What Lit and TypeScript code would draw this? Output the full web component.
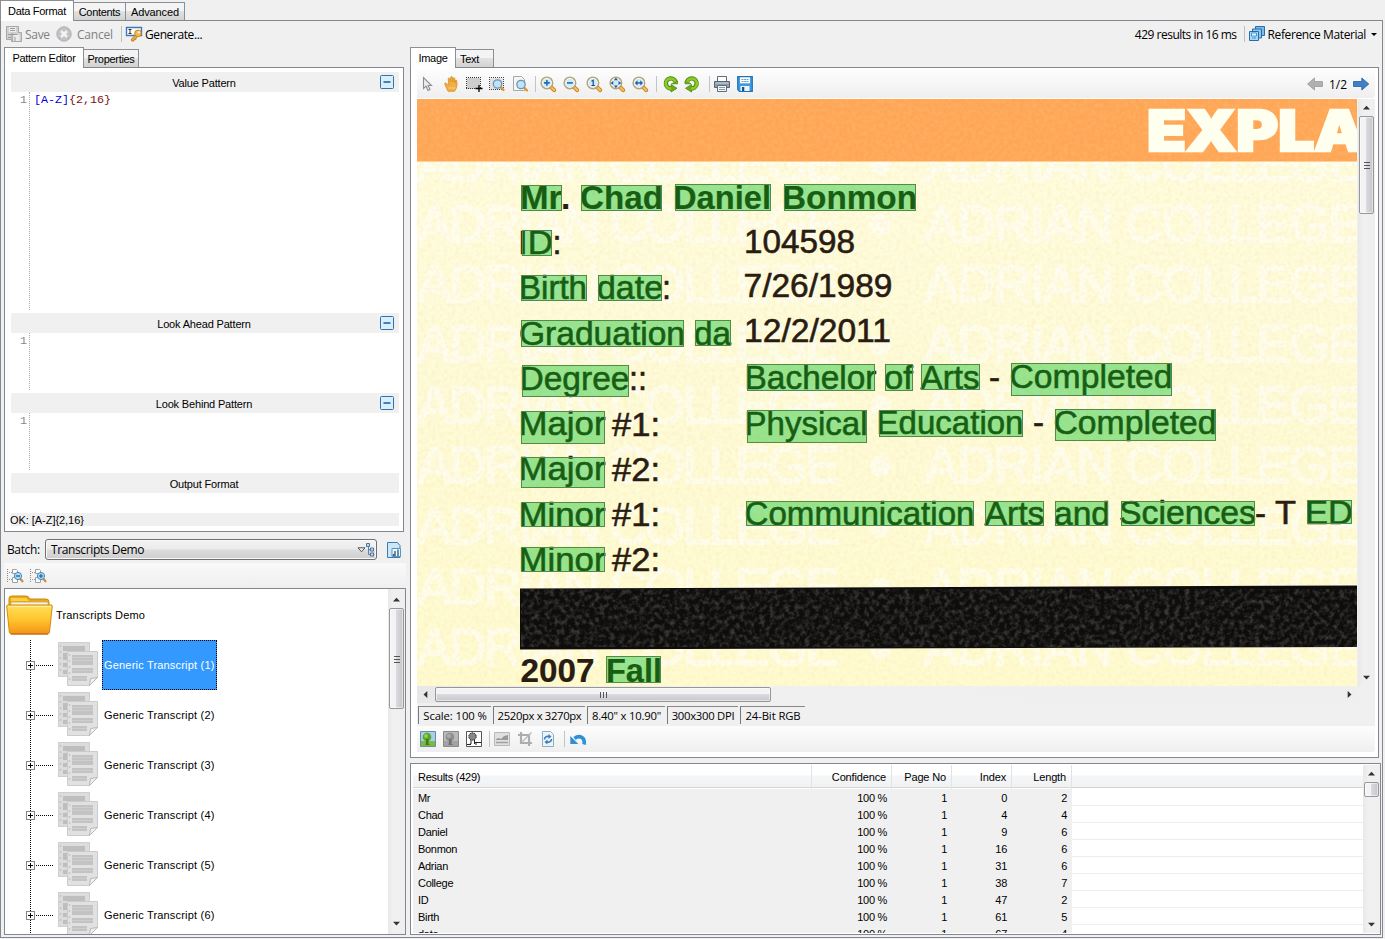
import { LitElement, html, svg, css, nothing } from "lit";
import { customElement, property } from "lit/decorators.js";

const glass = (inner: unknown) => svg`
  <path d="M10.8 10.8L14.2 14.2" stroke="#b87a1c" stroke-width="4" stroke-linecap="round"/>
  <path d="M10.8 10.8L14.2 14.2" stroke="#f8bd58" stroke-width="2.400" stroke-linecap="round"/>
  <circle cx="6.9" cy="6.9" r="5.7" fill="#cfeaf9" stroke="#b8a273" stroke-width="1.6"/>
  <circle cx="6.9" cy="6.9" r="4.6" fill="none" stroke="#fff" stroke-width=".7"/>${inner}`;

const smallGlass = (x: number, y: number) => svg`
  <path d="M${x + 3} ${y + 3}L${x + 6} ${y + 6}" stroke="#e0952a" stroke-width="2.4" stroke-linecap="round"/>
  <circle cx=${x} cy=${y} r="4.2" fill="#bfe3f8" stroke="#6d94b5" stroke-width="1.3"/>`;

const refreshArc = svg`
  <path d="M12.500 5.500A5 5 0 1 0 8.500 12.400" fill="none" stroke="#4f8a10" stroke-width="4.400"/>
  <path d="M8 8.500v7.500l6-3.700z" fill="#6aac16" stroke="#4f8a10" stroke-width=".8"/>
  <path d="M8.500 7.800h6V5z" fill="#6aac16" stroke="#4f8a10" stroke-width=".8"/>
  <path d="M12.300 5.500A5 5 0 1 0 8.500 12.400" fill="none" stroke="#8ccc26" stroke-width="2.600"/>`;

const treeBits = (sign: unknown) => svg`
  <path d="M.5 1v14" stroke="#888" stroke-dasharray="1 1"/>
  <path d="M2 4.500h3M2 11.500h3" stroke="#999" stroke-dasharray="1 1"/>
  <path d="M5.500 1.500h4l1 1v3h-5zM5.500 9.500h5v5h-5z" fill="#fff" stroke="#a0a0a0"/>
  <path d="M13 10.500l3 3.500" stroke="#c98a3c" stroke-width="2"/>
  <circle cx="11" cy="8" r="3.600" fill="#a9dcf5" stroke="#4b86b8"/>${sign}`;

const icons: Record<string, unknown> = {
  saveGray: svg`<path d="M.5.5h12v6h3v9h-10v-2h-5z" fill="#d0d0d0" stroke="#a8a8a8"/><path d="M3 1h7v5H3zM7.500 9h6v6h-6z" fill="#ececec"/><path d="M4 2.500h5M4 4.500h5M2 8.500h9M6 7v8M9 11v4M2 11.500h3" stroke="#9c9c9c"/>`,
  cancel: svg`<circle cx="8" cy="8" r="7.200" fill="#c2c2c2" stroke="#b0b0b0"/><path d="M5 5l6 6M11 5l-6 6" stroke="#f4f4f4" stroke-width="2.600"/>`,
  generate: svg`<path d="M.5 1.500h15v8H.5z" fill="#fff" stroke="#3f78b8" stroke-width="1.400"/><path d="M2.500 3.500h3M4 3.500v4M2.500 7.500h3" stroke="#333"/><path d="M10 8.500L5.500 13v2H8l.5-1.500H10V12l1.500-1" fill="#e9a73a" stroke="#b87a1c" stroke-width=".8"/><circle cx="12" cy="7.300" r="3.300" fill="#f5bb53" stroke="#c98923"/><circle cx="13" cy="6.300" r="1" fill="#fff"/>`,
  stack: svg`<path d="M6.500.5h9v9h-9z" fill="#7fbbe8" stroke="#2a6cab"/><path d="M3.500 3h9v9h-9z" fill="#8ec6ee" stroke="#2a6cab"/><path d="M.5 5.500h9v9h-9z" fill="#a9d8f5" stroke="#2a6cab"/><path d="M2.500 7h5v3h-5zM3 12h4" fill="#e8f6ff" stroke="#3a8ed0" stroke-width=".9"/>`,
  pointer: svg`<path d="M3.500 1.500v11l2.600-2.300 1.900 4.300 2-.9-1.900-4.100h3.400z" fill="#ececec" stroke="#8d8d95" stroke-width="1.100"/>`,
  hand: svg`<path d="M5 15.300h6.500c1.400-1.500 2.400-4 2.500-7.500l-.2-3c-.2-1-1.300-1-1.500 0l-.2 2.200-.3-4.500c-.1-1.100-1.500-1.100-1.600 0L9.900 6 9.400 1.300C9.300.2 7.800.2 7.700 1.300L7.600 6 6.700 2.600c-.3-1-1.600-.8-1.500.3l.6 6.300-2.600-2c-1-.7-1.900.3-1.300 1.200z" fill="#f3ae42" stroke="#d68f26" stroke-width=".8"/><path d="M5.500 12h7" stroke="#fbd182"/>`,
  select: svg`<path d="M1 2h13v11H1z" fill="#cdcdcd"/><path d="M0 1.500h15M0 12.500h15M.5 1v12M14.500 1v12" stroke="#333" stroke-dasharray="1 1"/><path d="M13 9v7M9.500 12.500h7" stroke="#000" stroke-width="1.300"/>`,
  selectZoom: svg`<path d="M1 2h13v12H1z" fill="#e2e2e2"/><path d="M0 1.500h15M0 13.500h15M.5 1v13M14.500 1v13" stroke="#444" stroke-dasharray="1 1"/>${smallGlass(8.5, 8)}`,
  pageZoom: svg`<path d="M1.500.5h8l3 3v11h-11z" fill="#f6f6f6" stroke="#a9a9a9"/>${smallGlass(9, 8.500)}`,
  zoomIn: glass(svg`<path d="M4 6.900h5.800M6.900 4v5.800" stroke="#1f6db5" stroke-width="1.600"/>`),
  zoomOut: glass(svg`<path d="M4 6.900h5.800" stroke="#1f6db5" stroke-width="1.600"/>`),
  zoomOne: glass(svg`<path d="M5.500 5.300L7.200 4.300V9.400M5.500 9.500h3.400" fill="none" stroke="#1d4f80" stroke-width="1.200"/>`),
  zoomFit: glass(svg`<path d="M1.500 6.900l2.800-2v4zM12.300 6.900l-2.800-2v4zM6.900 1.500l-2 2.800h4zM6.900 12.300l-2-2.800h4z" fill="#265f9e"/>`),
  zoomWidth: glass(svg`<path d="M2.800 6.900l2.700-2.700v5.400zM11 6.900L8.300 4.200v5.400z" fill="#1f5fa8"/><path d="M4 6.900h6" stroke="#1f5fa8" stroke-width="1.400"/>`),
  rotateLeft: refreshArc,
  rotateRight: svg`<g transform="translate(13.500 0) scale(-1 1)">${refreshArc}</g>`,
  print: svg`<path d="M3.500.5h9v5h-9z" fill="#fff" stroke="#5e6c7a"/><path d="M.5 5.500h15v6H.5z" fill="#8f9cab" stroke="#566373"/><path d="M1.500 7h13" stroke="#cdd5dd"/><path d="M3.500 9.500h9v6h-9z" fill="#f4f7fa" stroke="#5e6c7a"/><path d="M5 11.500h6M5 13.500h6" stroke="#8d9aa8"/>`,
  disk: svg`<path d="M.7.7h14.600v14.600H2.500L.7 13.500z" fill="#3d9be0" stroke="#2272b8" stroke-width="1.200"/><path d="M3 1.300h10v6H3z" fill="#fff"/><path d="M4.500 3.500h7M4.500 5.500h7" stroke="#6f98bb" stroke-dasharray="2 .6"/><path d="M3.500 10h9v5h-9z" fill="#eaf5fd"/><path d="M5 11h2.300v4H5z" fill="#1d4f80"/>`,
  prev: svg`<path d="M.5 8L7.500 2v3.500h8v5h-8V14z" fill="#b0b0b0" stroke="#9a9a9a" stroke-width=".8"/>`,
  next: svg`<path d="M15.800 8L8.800 2v3.500H.5v5h8.300V14z" fill="#3f80c6" stroke="#2560a0" stroke-width=".8"/>`,
  photo: svg`<path d="M.5.500h15v15H.5z" fill="#a3d0ea" stroke="#6f8ba0"/><path d="M1 10h14v5H1z" fill="#7cbb40"/><circle cx="7" cy="6" r="4.300" fill="#5ba52c"/><circle cx="6" cy="5" r="2" fill="#97cd48"/><path d="M6.500 8h2v5l2 1h-5z" fill="#3c7a1e"/>`,
  photoGray: svg`<path d="M.5.500h15v15H.5z" fill="#b9b9b9" stroke="#8a8a8a"/><path d="M1 10h14v5H1z" fill="#a2a2a2"/><circle cx="7" cy="6" r="4.300" fill="#8e8e8e"/><circle cx="6" cy="5" r="2" fill="#ababab"/><path d="M6.500 8h2v5l2 1h-5z" fill="#707070"/>`,
  photoMono: svg`<path d="M.5.500h15v15H.5z" fill="#fff" stroke="#555"/><circle cx="6.500" cy="5.500" r="3.700" fill="#888" stroke="#222" stroke-dasharray="1.500 .8"/><path d="M5 9v4L3 13.500M8.500 9v4M1 13.500h4M8 11.500h7M10 11v3" fill="none" stroke="#222" stroke-width="1"/>`,
  chart: svg`<path d="M.5 1.500h15v13H.5z" fill="#e0e0e0" stroke="#b8b8b8"/><path d="M2 8l3-1 2 1 3-3 4-1v5H2z" fill="#999"/><path d="M2 11.500h12" stroke="#a0a0a0" stroke-width="1.500"/>`,
  crop: svg`<path d="M4 1v11h11M1 4h11v11" fill="none" stroke="#adadad" stroke-width="2.200"/><path d="M5.500 10.500L14.500 1.500" stroke="#b5b5b5" stroke-width="1.300"/>`,
  pageRefresh: svg`<path d="M2.500.5h8l3 3v12h-11z" fill="#eaf5fc" stroke="#8eabc2"/><path d="M4.500 8.500C4.500 6 6.500 5 9 5.500M11.500 8c0 2.500-2 3.500-4.500 3" fill="none" stroke="#3a7cba" stroke-width="1.600"/><path d="M8.500 3v5L11.500 5.500zM7.500 8.500v5L4.500 11z" fill="#3a7cba"/>`,
  undo: svg`<path d="M14 13.500C15.500 6.500 9.500 3.500 4.500 7.500" fill="none" stroke="#2f90d4" stroke-width="3.600"/><path d="M.3 5v8h8z" fill="#2f90d4"/>`,
  pageInfo: svg`<path d="M1.500.5h10l2.500 3v12H1.500z" fill="#c8e8f8" stroke="#3f7cb0"/><path d="M6 6.500h8.500v8H6z" fill="#eef8fd" stroke="#5e93bd"/><path d="M9 9v5M12 7.500V14M7.500 12v2" stroke="#22557f" stroke-width="1.300"/>`,
  collapse: treeBits(svg`<path d="M9 8h4" stroke="#1f5f96" stroke-width="1.300"/>`),
  expand: treeBits(svg`<path d="M9 8h4M11 6v4" stroke="#1f5f96" stroke-width="1.200"/>`),
  hierarchy: svg`<g transform="translate(3 -1)"><path d="M5.500 5v8.500h3M5.500 8.500h3" fill="none" stroke="#5f7f9c"/><path d="M3.500 2.500h3v3h-3zM7.500 7h3v3h-3zM7.500 12h3v3h-3z" fill="#bfdcf0" stroke="#4b779f"/></g>`,
};

const icon = (name: string) =>
  html`<svg class="icon" width="16" height="16" viewBox="0 0 16 16" overflow="visible">${icons[name]}</svg>`;

const iconStyles = css`.icon { display: block; flex: none; }`;

@customElement("scroll-bar")
class ScrollBar extends LitElement {
  @property() axis: "x" | "y" = "y";
  @property({ type: Number }) offset = 0;
  @property({ type: Number }) size = 0;

  static styles = css`
    :host { display: flex; background: linear-gradient(90deg, #e8e8e8, #f0f0f0 30%, #efefef); box-sizing: border-box; }
    .bar { display: flex; flex: 1; min-width: 0; }
    .bar.y { flex-direction: column; }
    .end { width: 17px; height: 17px; flex: none; display: flex; align-items: center; justify-content: center; }
    .track { flex: 1; display: flex; }
    .y .track { flex-direction: column; }
    .thumb { box-sizing: border-box; border: 1px solid #979797; border-radius: 2px; box-shadow: inset 0 0 0 1px rgba(255, 255, 255, .5); display: flex; align-items: center; justify-content: center; }
    .y .thumb { width: 15px; margin-left: 1px; background: linear-gradient(90deg, #f3f3f3 0 45%, #dadade 50%, #c4c4ca); }
    .x .thumb { height: 15px; margin-top: 1px; background: linear-gradient(#f3f3f3 0 45%, #dadade 50%, #c8c8cc); }
  `;

  render() {
    const y = this.axis === "y";
    const thumb = y
      ? `margin-top:${this.offset}px;height:${this.size}px`
      : `margin-left:${this.offset}px;width:${this.size}px`;
    return html`<div class="bar ${this.axis}">
      <div class="end"><svg width="7" height="7" viewBox="0 0 7 7"><path d=${y ? "M0 5.5L3.5 1.8 7 5.5z" : "M5.300 0L1.500 3.500 5.300 7z"} fill="#333"/></svg></div>
      <div class="track"><div class="thumb" style=${thumb}>
        ${this.size > 30
          ? html`<svg width="8" height="8" viewBox="0 0 8 8"><path d=${y ? "M1 1.500h6M1 4.500h6M1 7.500h6" : "M1.500 1v6M4.500 1v6M7.500 1v6"} stroke="#555"/></svg>`
          : nothing}
      </div></div>
      <div class="end"><svg width="7" height="7" viewBox="0 0 7 7"><path d=${y ? "M0 1.800L3.500 5.500 7 1.800z" : "M1.700 0L5.500 3.500 1.700 7z"} fill="#333"/></svg></div>
    </div>`;
  }
}

/* Recognised words: [text, text x, baseline, text width, box x, y, right, bottom] */
type Word = [string, number, number, number, number, number, number, number];
const boldWords: Word[] = [
  ["Mr", 520, 208.500, 42, 521, 185, 562, 211],
  ["Chad", 580, 208.500, 83, 581, 185, 662, 211],
  ["Daniel", 673, 208.500, 98, 675, 184, 771, 211],
  ["Bonmon", 782, 208.500, 135, 784, 184, 916, 211],
  ["Fall", 606, 682, 56, 606, 656, 661, 683],
];
const words: Word[] = [
  ["ID", 518, 253.500, 35, 522, 230, 552, 256],
  ["Birth", 519, 299, 68, 521, 275, 587, 301],
  ["date", 597, 299, 66, 598, 275, 662, 301],
  ["Graduation", 519, 344.500, 166, 521, 320, 684, 347],
  ["da", 694, 344.500, 37, 695, 320, 731, 346],
  ["Degree", 519.500, 389.500, 110, 522, 365, 629, 397],
  ["Bachelor", 744.500, 389, 132, 747, 364, 875, 391],
  ["of", 884, 388.500, 29, 885, 364, 913, 391],
  ["Arts", 920.500, 388.500, 59, 921, 364, 980, 390],
  ["Completed", 1009.500, 388, 163, 1011, 363, 1172, 396],
  ["Major", 518.500, 434.500, 87, 521, 411, 605, 444],
  ["Physical", 744.500, 434.500, 123, 747, 410, 867, 443],
  ["Education", 876.500, 434, 147, 879, 410, 1023, 437],
  ["Completed", 1053.500, 433.500, 163, 1055, 409, 1216, 441],
  ["Major", 518.500, 480, 87, 521, 457, 605, 488],
  ["Minor", 518.500, 526, 87, 521, 502, 605, 527],
  ["Communication", 744.500, 525, 230, 746, 501, 974, 526],
  ["Arts", 984.500, 524.500, 60, 985, 501, 1044, 526],
  ["and", 1054, 524.500, 56, 1055, 501, 1108, 526],
  ["Sciences", 1119, 524, 137, 1121, 501, 1255, 526],
  ["ED", 1305, 523.500, 48, 1307, 500, 1352, 524],
  ["Minor", 518.500, 570.500, 87, 521, 547, 605, 572],
];
/* Unmatched text: [text, x, baseline, width] */
const plain: [string, number, number, number][] = [
  [":", 552.500, 253.500, 9], ["104598", 744, 253, 111], [":", 662, 299, 9], ["7/26/1989", 743.500, 296.500, 149],
  ["12/2/2011", 744, 342, 147], ["::", 629, 389.500, 18], ["-", 989, 388.500, 11], ["#1:", 612, 435.500, 48],
  ["-", 1033, 434, 11], ["#2:", 612, 480.500, 48], ["#1:", 612, 526, 48], ["-", 1255, 524.500, 11],
  ["T", 1275, 523.500, 21], ["#2:", 612, 570.500, 48],
];
const markRows = [181, 242, 302, 362, 423, 483, 544, 605, 665];

@customElement("page-scan")
class PageScan extends LitElement {
  static styles = css`
    :host { display: block; overflow: hidden; }
    svg { display: block; }
    text { font-family: "Liberation Sans", Arial, sans-serif; font-size: 33.500px; fill: #2a1c10; stroke: #2a1c10; stroke-width: .6px; }
    .bold { font-weight: 700; stroke-width: .2px; }
    .mark { font-size: 52px; fill: #fffffa; stroke: #fffffa; stroke-width: 2px; }
    .marks { opacity: .62; }
    .title { font-family: Inter, "Liberation Sans", sans-serif; font-weight: 900; font-size: 57px; fill: #fffff0; stroke: #fffff0; stroke-width: 2.500px; }
    .hit { fill: rgba(0, 193, 30, .4); stroke: #528a4c; stroke-width: 1; }
  `;

  render() {
    const word = (w: Word, cls: string) => svg`<text class=${cls} x=${w[1]} y=${w[2]} textLength=${w[3]} lengthAdjust="spacingAndGlyphs">${w[0]}</text>`;
    return html`<svg width="940" height="587" viewBox="417 99 940 587">
      <defs>
        <linearGradient id="paper" x1="0" y1="0" x2="0" y2="1">
          <stop offset="0" stop-color="#fffde0"/><stop offset=".5" stop-color="#fefbd8"/><stop offset="1" stop-color="#fffbd0"/>
        </linearGradient>
        <filter id="grain" x="0" y="0" width="100%" height="100%">
          <feTurbulence type="fractalNoise" baseFrequency=".25" numOctaves="3" seed="4"/>
          <feColorMatrix values="0 0 0 0 .92  0 0 0 0 .8  0 0 0 0 .45  1.100 0 0 0 -.42"/>
        </filter>
        <filter id="speck" x="0" y="0" width="100%" height="100%">
          <feTurbulence type="fractalNoise" baseFrequency=".2" numOctaves="3" seed="9"/>
          <feColorMatrix values="0 0 0 0 .35  0 0 0 0 .34  0 0 0 0 .34  1.500 0 0 0 -.62"/>
        </filter>
      </defs>
      <rect x="417" y="99" width="940" height="587" fill="url(#paper)"/>
      <g class="marks">${markRows.map((y) => svg`
        <text class="mark" x="417" y=${y} textLength="423">ADRIAN COLLEGE</text>
        <circle cx="880.500" cy=${y - 17} r="10.500" fill="#fffffa"/>
        <text class="mark" x="924" y=${y} textLength="439">ADRIAN COLLEGE</text>`)}</g>
      <rect x="417" y="161" width="940" height="525" filter="url(#grain)" opacity=".75"/>
      <rect x="417" y="99" width="940" height="62.500" fill="#ffa656"/>
      <rect x="417" y="99" width="940" height="62" filter="url(#grain)" opacity=".3"/>
      <text class="title" x="1147" y="150.500" textLength="218" lengthAdjust="spacingAndGlyphs">EXPLA</text>
      <path d="M520 588.500L1357 585.500V647L520 649.500z" fill="#0f0d0c"/>
      <rect x="521" y="589" width="836" height="58" filter="url(#speck)" opacity=".5"/>
      ${plain.map(([t, x, y, w]) => svg`<text x=${x} y=${y} textLength=${w} lengthAdjust="spacingAndGlyphs">${t}</text>`)}
      <text class="bold" x="561" y="208.500">.</text>
      <text class="bold" x="520.500" y="682" textLength="74" lengthAdjust="spacingAndGlyphs">2007</text>
      ${boldWords.map((w) => word(w, "bold"))}
      ${words.map((w) => word(w, ""))}
      ${[...boldWords, ...words].map((w) => svg`<rect class="hit" x=${w[4] + 0.5} y=${w[5] + 0.5} width=${w[6] - w[4] - 1} height=${w[7] - w[5] - 1}/>`)}
    </svg>`;
  }
}

@customElement("pattern-editor")
class PatternEditor extends LitElement {
  static styles = css`
    :host { display: flex; flex-direction: column; box-sizing: border-box; width: 400px; height: 465px; border: 1px solid #828790; background: #fff; padding: 4px 4px 4px 6px; }
    .head { display: flex; align-items: center; justify-content: center; height: 20px; background: #f0f0f0; position: relative; padding-right: 2px; letter-spacing: -.17px; padding-top: 1px; box-sizing: border-box; }
    .toggle { position: absolute; right: 5px; top: 3px; }
    .editor { display: flex; }
    .editor.tall { height: 221px; }
    .editor.short { height: 60px; }
    .gutter { width: 19px; border-right: 1px dotted #aaa; margin-bottom: 3px; text-align: right; color: #888; box-sizing: border-box; padding-right: 2px; }
    .gutter, .code { font: 11.670px/17px "Liberation Mono", "Courier New", monospace; }
    .code { padding-left: 4px; white-space: pre; }
    .set { color: #0000e0; }
    .count { color: #7b1010; }
    .status { margin-top: 20px; height: 13px; line-height: 14px; background: #f0f0f0; letter-spacing: -.05px; text-indent: -1px; }
  `;

  private head(title: string, toggle = true) {
    return html`<div class="head">${title}${toggle
      ? html`<svg class="toggle" width="14" height="14" viewBox="0 0 14 14"><rect x=".5" y=".5" width="13" height="13" rx="1" fill="#d5effc" stroke="#3c6fa5"/><path d="M3.500 7h7" stroke="#2c5f96" stroke-width="1.600"/></svg>`
      : nothing}</div>`;
  }

  render() {
    return html`
      ${this.head("Value Pattern")}
      <div class="editor tall"><div class="gutter">1</div><div class="code"><span class="set">[A-Z]</span><span class="count">{2,16}</span></div></div>
      ${this.head("Look Ahead Pattern")}
      <div class="editor short"><div class="gutter">1</div></div>
      ${this.head("Look Behind Pattern")}
      <div class="editor short"><div class="gutter">1</div></div>
      ${this.head("Output Format", false)}
      <div class="status">OK: [A-Z]{2,16}</div>`;
  }
}

@customElement("batch-tree")
class BatchTree extends LitElement {
  static styles = css`
    :host { display: flex; box-sizing: border-box; width: 402px; height: 347px; border: 1px solid #828790; background: #fff; letter-spacing: .17px; }
    .list { flex: 1; overflow: hidden; padding-top: 1px; }
    .root { height: 50px; display: flex; align-items: center; padding-left: 1px; }
    .folder { margin-right: 3px; }
    .row { height: 50px; display: flex; align-items: center; }
    .guide { width: 48px; flex: none; }
    .docs { margin: 0 3px 0 5px; }
    .label { height: 50px; line-height: 50px; box-sizing: border-box; width: 115px; padding-left: 2px; white-space: nowrap; letter-spacing: .19px; }
    .label.on { background: #3399ff; color: #fff; border: 1px dotted #000; padding-left: 1px; line-height: 48px; }
    scroll-bar { width: 17px; padding: 2px 0; }
  `;

  render() {
    return html`<div class="list">
        <div class="root">
          <svg class="folder" width="47" height="42" viewBox="0 0 47 42">
            <defs><linearGradient id="f" x1="0" y1="0" x2="0" y2="1"><stop offset="0" stop-color="#ffe05a"/><stop offset=".5" stop-color="#ffc52e"/><stop offset="1" stop-color="#f59217"/></linearGradient></defs>
            <path d="M3 14V4.500Q3 2 5.500 2H20q3 0 3.500 3H40q3 0 3 3v8z" fill="#e9a916" stroke="#c88a10"/>
            <path d="M5 4h15l3 3H5z" fill="#fbd23c"/>
            <path d="M5 8h37v7H5z" fill="#f5f0e4" stroke="#caa75a" stroke-width=".8"/>
            <path d="M.7 12Q.7 11 2 11H45q1.500 0 1.300 1L43.500 38q-.3 2-2 2H5.500q-2 0-2.200-2z" fill="url(#f)" stroke="#d58a12"/>
            <path d="M2 12.500H45" stroke="#fff0a0"/><path d="M5 40h37" stroke="#b5650f"/>
          </svg>
          <span>Transcripts Demo</span>
        </div>
        ${[1, 2, 3, 4, 5, 6].map((n) => html`<div class="row">
          <svg class="guide" width="48" height="50" viewBox="0 0 48 50">
            <path d="M25.500 0v50M31 25.500h17" stroke="#000" stroke-dasharray="1 1"/>
            <rect x="21.500" y="21.500" width="8" height="8" fill="#fff" stroke="#848484"/>
            <path d="M23 25.500h5M25.500 23v5" stroke="#000"/>
          </svg>
          <svg class="docs" width="41" height="50" viewBox="0 0 41 50">
            <rect x=".5" y="2.500" width="31" height="34" fill="#dcdcdc" stroke="#cfcfcf"/>
            <path d="M5 6h22v5H5zM5 13h22v7H5zM5 23h22v4H5zM5 30h22v4H5z" fill="#bebebe"/>
            <path d="M2.500 5v30" stroke="#c2c2c2" stroke-width="1.500" stroke-dasharray="2 4"/>
            <path d="M9.500 11.500h30v26l-8 8h-22z" fill="#e1e1e1" stroke="#cbcbcb"/>
            <path d="M14 15h21v10H14zM14 28h21v5H14zM14 36h15v5H14z" fill="#c3c3c3"/>
            <path d="M14 17.500h21M14 20.500h21M14 30.500h21M14 38.500h15" stroke="#cecece"/>
            <path d="M11.500 14v30" stroke="#c6c6c6" stroke-width="1.500" stroke-dasharray="2 4"/>
            <path d="M31.500 45.500l1-7 7-1z" fill="#f0f0f0" stroke="#b8b8b8"/>
          </svg>
          <div class="label ${n === 1 ? "on" : ""}">Generic Transcript (${n})</div>
        </div>`)}
      </div>
      <scroll-bar offset="0" size="101"></scroll-bar>`;
  }
}

@customElement("results-grid")
class ResultsGrid extends LitElement {
  static styles = css`
    :host { display: flex; box-sizing: border-box; width: 971px; height: 172px; border: 1px solid #828790; background: #fff; padding: 1px 0 1px 2px; }
    .table { flex: 1; overflow: hidden; }
    .head, .row { display: grid; grid-template-columns: 399px 80px 60px 60px 60px 1fr; }
    .head { height: 22px; line-height: 24px; background: linear-gradient(#fff 0 45%, #f5f6f8 50%, #f1f2f4); border-bottom: 1px solid #d5d5d5; letter-spacing: -.15px; margin-bottom: 1px; }
    .head span { border-right: 1px solid #e2e3e5; text-align: right; padding-right: 5px; }
    .head span:first-child { text-align: left; padding-left: 5px; letter-spacing: -.25px; }
    .head span:last-child { border: 0; }
    .row { height: 17px; line-height: 19px; letter-spacing: -.3px; background: #f0f0f0; }
    .row span { text-align: right; padding-right: 5px; height: 17px; box-sizing: border-box; }
    .row span:first-child { text-align: left; padding-left: 5px; }
    .row span:last-child { background: #fff; border-bottom: 1px solid #ededed; }
    scroll-bar { width: 17px; }
  `;

  render() {
    const rows: [string, number, number][] = [
      ["Mr", 0, 2], ["Chad", 4, 4], ["Daniel", 9, 6], ["Bonmon", 16, 6], ["Adrian", 31, 6],
      ["College", 38, 7], ["ID", 47, 2], ["Birth", 61, 5], ["date", 67, 4],
    ];
    return html`<div class="table">
        <div class="head"><span>Results (429)</span><span>Confidence</span><span>Page No</span><span>Index</span><span>Length</span><span></span></div>
        ${rows.map(([w, i, l]) => html`<div class="row"><span>${w}</span><span>100 %</span><span>1</span><span>${i}</span><span>${l}</span><span></span></div>`)}
      </div>
      <scroll-bar offset="0" size="15"></scroll-bar>`;
  }
}

@customElement("image-viewer")
class ImageViewer extends LitElement {
  static styles = [iconStyles, css`
    :host { display: flex; flex-direction: column; box-sizing: border-box; width: 969px; height: 691px; border: 1px solid #828790; background: #fff; padding: 0 3px 5px 6px; }
    .bar { display: flex; align-items: center; background: linear-gradient(#fdfdfd, #efefef); border-radius: 0 0 3px 0; }
    .top { height: 28px; margin: 2px 0 1px; }
    .bottom { height: 26px; }
    .slot { width: 20px; padding-left: 3px; }
    .sep { width: 5px; height: 16px; box-sizing: border-box; padding-left: 3px; }
    .sep.wide { width: 8px; padding-left: 4px; }
    .sep.mid { width: 7px; padding-left: 4px; }
    .sep::before { content: ""; display: block; width: 1px; height: 100%; background: #c4c4c4; }
    .pager { margin-left: auto; display: flex; align-items: center; gap: 6px; padding-right: 6px; font: 12px "Open Sans", sans-serif; }
    .view { display: grid; grid-template-columns: 941px 17px; grid-template-rows: 587px 17px; background: #f0f0f0; }
    .view page-scan { width: 940px; }
    .status { height: 23px; background: #f0f0f0; display: flex; padding: 3px 0 2px 1px; box-sizing: border-box; gap: 2px; font: 11.300px/17px "Open Sans", sans-serif; letter-spacing: -.35px; }
    .cell { box-sizing: border-box; border-left: 1px solid #777; border-top: 1px solid #888; text-align: center; white-space: nowrap; height: 18px; }
    .c1 { width: 73px; letter-spacing: -.1px; } .c2 { width: 92px; } .c3 { width: 78px; letter-spacing: -.2px; } .c4 { width: 71px; letter-spacing: -.28px; } .c5 { width: 65px; letter-spacing: -.1px; }
  `];

  render() {
    const slot = (n: string) => html`<div class="slot">${icon(n)}</div>`;
    return html`
      <div class="bar top">
        ${["pointer", "hand", "select", "selectZoom", "pageZoom"].map(slot)}<div class="sep"></div>
        ${["zoomIn", "zoomOut", "zoomOne", "zoomFit", "zoomWidth"].map(slot)}<div class="sep wide"></div>
        ${["rotateLeft", "rotateRight"].map(slot)}<div class="sep"></div>
        ${["print", "disk"].map(slot)}
        <div class="pager">${icon("prev")}<span>1/2</span>${icon("next")}</div>
      </div>
      <div class="view">
        <page-scan></page-scan>
        <scroll-bar offset="0" size="98"></scroll-bar>
        <scroll-bar axis="x" offset="1" size="336"></scroll-bar>
      </div>
      <div class="status">
        <div class="cell c1">Scale: 100 %</div><div class="cell c2">2520px x 3270px</div>
        <div class="cell c3">8.40" x 10.90"</div><div class="cell c4">300x300 DPI</div><div class="cell c5">24-Bit RGB</div>
      </div>
      <div class="bar bottom">
        ${["photo", "photoGray", "photoMono"].map(slot)}<div class="sep"></div>
        ${["chart", "crop", "pageRefresh"].map(slot)}<div class="sep mid"></div>
        ${slot("undo")}
      </div>`;
  }
}

@customElement("app-root")
class AppRoot extends LitElement {
  static styles = [iconStyles, css`
    :host { display: flex; flex-direction: column; width: 1385px; height: 939px; overflow: hidden; background: #f0f0f0; color: #000; font: 11px "Liberation Sans", Arial, sans-serif; }
    .tabs { display: flex; align-items: flex-end; height: 20px; letter-spacing: -.3px; }
    .tab { box-sizing: border-box; height: 18px; line-height: 19px; border: 1px solid #8c8e94; border-left-width: 0; border-bottom: 0; background: linear-gradient(#f4f4f4 0 45%, #e2e2e2 50%, #d2d2d2); text-align: center; white-space: nowrap; }
    .tab.active { height: 21px; line-height: 20px; margin-bottom: -1px; background: #fff; position: relative; border-left-width: 1px; }
    .tab.tight { letter-spacing: -.1px; }
    .tab.text { text-align: left; padding-left: 4px; }
    .page { flex: 1; display: flex; flex-direction: column; margin: 0 2px 1px 0; border: 1px solid #828790; }
    .w74 { width: 74px; } .w53 { width: 52px; } .w59 { width: 59px; } .w80 { width: 80px; } .w55 { width: 55px; } .w46 { width: 46px; } .w38 { width: 38px; }
    .commands { display: flex; align-items: center; height: 26px; padding-left: 5px; font: 12px "Open Sans", "Noto Sans", sans-serif; letter-spacing: -.4px; }
    .commands span { white-space: nowrap; }
    .off { color: #808080; }
    .save { width: 31px; margin-left: 3px; letter-spacing: -.3px; } .cancel { width: 44px; margin-left: 5px; letter-spacing: -.2px; }
    .rule { width: 1px; height: 16px; background: #c0c0c0; margin-right: 4px; }
    .gen { margin-left: 3px; }
    .found { margin-left: auto; margin-right: 7px; letter-spacing: -.5px; }
    .ref { margin: 0 5px 0 3px; }
    .caret { width: 0; border: 3px solid transparent; border-top-color: #000; border-bottom: 0; margin-right: 5px; }
    .body { display: flex; gap: 4px; padding-left: 3px; }
    .left { width: 402px; }
    .batch { display: flex; align-items: center; height: 27px; margin-top: 4px; padding-left: 3px; font: 12px "Open Sans", "Noto Sans", sans-serif; letter-spacing: -.38px; }
    .combo { display: flex; align-items: center; width: 332px; height: 21px; box-sizing: border-box; border: 1px solid #707070; border-radius: 3px; background: linear-gradient(#f4f4f4, #ebebeb 45%, #dcdcdc 55%, #cecece); box-shadow: inset 0 0 0 1px #f8f8f8; padding: 0 0 0 5px; }
    .blabel { width: 38px; }
    .drop { margin-left: auto; margin-right: -6px; }
    .pi { margin-left: 9px; }
    .treebar { display: flex; height: 25px; align-items: center; gap: 7px; padding: 0 0 0 3px; background: linear-gradient(#f9f9f9, #efefef); }
    results-grid { margin-top: 5px; }
  `];

  render() {
    return html`
      <div class="tabs"><div class="tab active w74">Data Format</div><div class="tab w53">Contents</div><div class="tab tight w59">Advanced</div></div>
      <div class="page">
        <div class="commands">
          ${icon("saveGray")}<span class="off save">Save</span>
          ${icon("cancel")}<span class="off cancel">Cancel</span>
          <div class="rule"></div>${icon("generate")}<span class="gen">Generate...</span>
          <span class="found">429 results in 16 ms</span><div class="rule"></div>
          ${icon("stack")}<span class="ref">Reference Material</span><div class="caret"></div>
        </div>
        <div class="body">
          <div class="left">
            <div class="tabs"><div class="tab active w80">Pattern Editor</div><div class="tab w55">Properties</div></div>
            <pattern-editor></pattern-editor>
            <div class="batch">
              <span class="blabel">Batch:</span>
              <div class="combo"><span>Transcripts Demo</span>
                <svg class="drop" width="9" height="6" viewBox="0 0 9 6"><path d="M1 .800h7L4.500 4.800z" fill="#eee" stroke="#555"/></svg>${icon("hierarchy")}
              </div>
              <div class="pi">${icon("pageInfo")}</div>
            </div>
            <div class="treebar">${icon("collapse")}${icon("expand")}</div>
            <batch-tree></batch-tree>
          </div>
          <div class="right">
            <div class="tabs"><div class="tab active w46">Image</div><div class="tab text w38">Text</div></div>
            <image-viewer></image-viewer>
            <results-grid></results-grid>
          </div>
        </div>
      </div>`;
  }
}
